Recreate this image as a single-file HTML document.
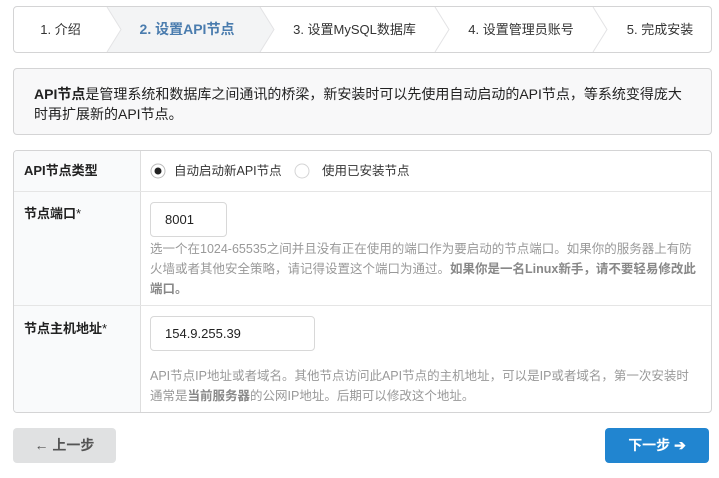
<!DOCTYPE html>
<html><head><meta charset="utf-8"><style>
*{box-sizing:border-box;margin:0;padding:0}
body{width:719px;height:478px;background:#fff;font-family:"Liberation Sans","Noto Sans CJK SC",sans-serif;color:#333;position:relative;overflow:hidden}
.abs{position:absolute}
.steps{left:13px;top:6px;width:699px;height:47px;border:1px solid #d4d4d5;border-radius:4px;overflow:hidden}
.step{position:absolute;top:0;height:45px;line-height:45px;text-align:center;font-size:13px;color:#333}
.box{left:13px;top:68px;width:699px;height:67px;border:1px solid #d4d4d5;border-radius:4px;background:#f8f8f9;font-size:14px;line-height:20px;padding:15px 20px;color:#222}
.tbl{left:13px;top:150px;width:699px;height:263px;border:1px solid #d4d4d5;border-radius:4px;overflow:hidden}
.lab{position:absolute;left:0;width:127px;background:#f9fafb;border-right:1px solid #dedede;font-size:13px;font-weight:bold;padding-left:10px;color:#222}
.hr{position:absolute;left:0;width:699px;height:1px;background:#e5e5e5}
.inp{position:absolute;border:1px solid #d8d8d8;border-radius:4px;font-size:13px;padding-left:14px;color:#222}
.help{position:absolute;left:136px;font-size:12.5px;line-height:20px;color:#999;width:552px}
.help b{color:#888}
.btn{height:35px;border-radius:4px;font-size:14px;font-weight:bold;line-height:35px;text-align:center}
</style></head><body>
<div class="abs steps">
 <div class="step" style="left:0;width:93px">1. 介绍</div>
 <div style="position:absolute;left:93px;top:0;width:153px;height:45px;background:#f3f4f5"></div>
 <svg style="position:absolute;left:0;top:0" width="699" height="45"><polyline points="93,0 107,22.5 93,45" fill="#fff" stroke="#e3e3e5"/><polygon points="246,0 260,22.5 246,45" fill="#f3f4f5"/><polyline points="246,0 260,22.5 246,45" fill="none" stroke="#e3e3e5"/><polyline points="421,0 435,22.5 421,45" fill="none" stroke="#e3e3e5"/><polyline points="579,0 593,22.5 579,45" fill="none" stroke="#e3e3e5"/></svg>
 <div class="step" style="left:100px;width:146px;font-weight:bold;font-size:14px;color:#4a7cae">2. 设置API节点</div>
 <div class="step" style="left:260px;width:161px">3. 设置MySQL数据库</div>
 <div class="step" style="left:435px;width:144px">4. 设置管理员账号</div>
 <div class="step" style="left:593px;width:106px">5. 完成安装</div>
</div>
<div class="abs box"><b>API节点</b>是管理系统和数据库之间通讯的桥梁，新安装时可以先使用自动启动的API节点，等系统变得庞大时再扩展新的API节点。</div>
<div class="abs tbl">
 <div class="lab" style="top:0;height:40px;line-height:40px">API节点类型</div>
 <div class="lab" style="top:40px;height:114px;padding-top:12px">节点端口<span style="font-weight:normal">*</span></div>
 <div class="lab" style="top:155px;height:110px;padding-top:12px">节点主机地址<span style="font-weight:normal">*</span></div>
 <div class="hr" style="top:40px"></div>
 <div class="hr" style="top:154px"></div>
 <svg style="position:absolute;left:136px;top:12px" width="160" height="16"><circle cx="8" cy="8" r="7" fill="#fff" stroke="#bbb"/><circle cx="8" cy="8" r="3.5" fill="#222"/><circle cx="156" cy="8" r="7" fill="#fff" stroke="#d4d4d5" transform="translate(-4 0)"/></svg>
 <div style="position:absolute;left:160px;top:11px;line-height:18px;font-size:12.5px;color:#333">自动启动新API节点</div>
 <div style="position:absolute;left:308px;top:11px;line-height:18px;font-size:12.5px;color:#333">使用已安装节点</div>
 <div class="inp" style="left:136px;top:51px;width:77px;height:35px;line-height:33px">8001</div>
 <div class="help" style="top:88px">选一个在1024-65535之间并且没有正在使用的端口作为要启动的节点端口。如果你的服务器上有防火墙或者其他安全策略，请记得设置这个端口为通过。<b>如果你是一名Linux新手，请不要轻易修改此端口。</b></div>
 <div class="inp" style="left:136px;top:165px;width:165px;height:35px;line-height:33px">154.9.255.39</div>
 <div class="help" style="top:215px;width:545px">API节点IP地址或者域名。其他节点访问此API节点的主机地址，可以是IP或者域名，第一次安装时通常是<b>当前服务器</b>的公网IP地址。后期可以修改这个地址。</div>
</div>
<div class="abs btn" style="left:13px;top:428px;width:103px;background:#e0e1e2;color:#555">← 上一步</div>
<div class="abs btn" style="left:605px;top:428px;width:104px;background:#2185d0;color:#fff">下一步 ➔</div>
</body></html>
